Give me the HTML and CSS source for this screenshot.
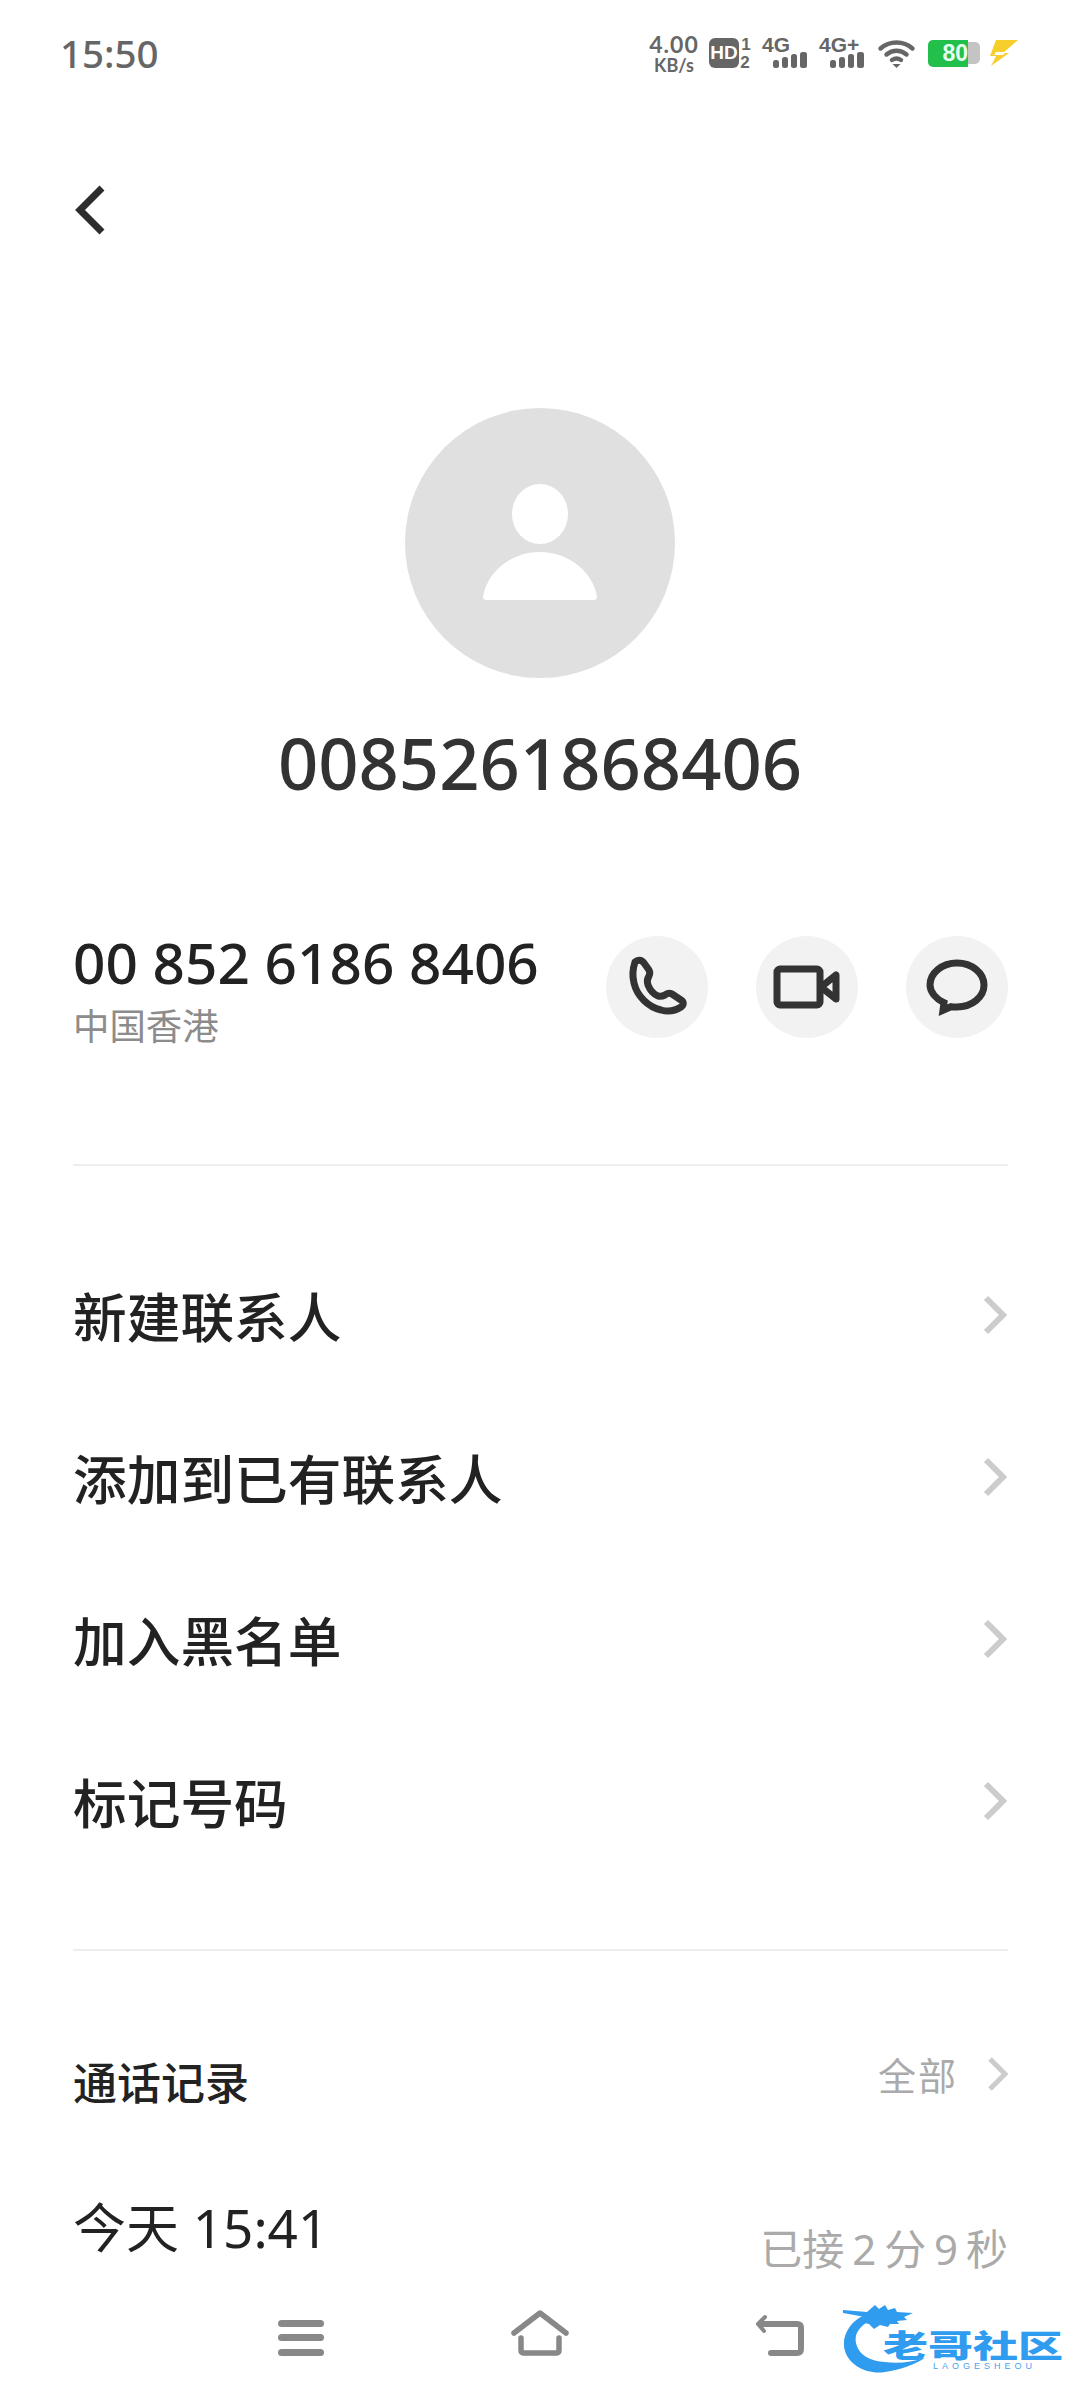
FILE: index.html
```html
<!doctype html>
<html lang="zh-CN">
<head>
	<meta charset="UTF-8">
	<title>0085261868406</title>
	<link rel="stylesheet" href="styles.css">
</head>
<body>
	<div class="status">
		<span class="time">15:50</span>
		<div class="status-icons">
			<div class="speed"><span class="speed-num">4.00</span><span class="speed-unit">KB/s</span></div>
			<svg class="ic-hd" width="40" height="32" viewBox="0 0 40 32">
				<rect x="0" y="1" width="30" height="30" rx="6" fill="#666"/>
				<text x="15" y="22" class="hd-text" text-anchor="middle">HD</text>
				<text x="37" y="13" class="sim-num" text-anchor="middle">1</text>
				<text x="36" y="31" class="sim-num" text-anchor="middle">2</text>
			</svg>
			<svg class="ic-sig" width="45" height="30" viewBox="0 0 45 30">
				<text x="-2" y="14" class="net-text">4G</text>
				<rect x="9" y="22" width="6" height="8" rx="2.5" fill="#666"/>
				<rect x="18" y="19" width="6" height="11" rx="2.5" fill="#666"/>
				<rect x="27" y="16" width="6" height="14" rx="2.5" fill="#666"/>
				<rect x="36" y="14" width="7" height="16" rx="2.5" fill="#666"/>
			</svg>
			<svg class="ic-sig" width="45" height="30" viewBox="0 0 45 30">
				<text x="-2" y="14" class="net-text">4G+</text>
				<rect x="9" y="22" width="6" height="8" rx="2.5" fill="#666"/>
				<rect x="18" y="19" width="6" height="11" rx="2.5" fill="#666"/>
				<rect x="27" y="16" width="6" height="14" rx="2.5" fill="#666"/>
				<rect x="36" y="14" width="7" height="16" rx="2.5" fill="#666"/>
			</svg>
			<svg class="ic-wifi" width="37" height="29" viewBox="0 0 37 29" fill="none" stroke="#666" stroke-width="4.4" stroke-linecap="round">
				<path d="M2.5 9.5c9-8 23-8 32 0"/>
				<path d="M8.5 15.5c6-5 14-5 20 0"/>
				<path d="M14 21c3-2 6-2 9 0"/>
				<path d="M18.5 29l-4-4h8z" fill="#666" stroke="none"/>
			</svg>
			<div class="battery"><span class="battery-fill">80</span><span class="battery-cap"></span></div>
			<svg class="ic-bolt" width="28" height="26" viewBox="0 0 28 26">
				<path d="M6 0h22L13 13h6L1 26l5-10H0z" fill="#f6cf2c"/>
				<path d="M6 12l-2 3h9l3-3z" fill="#fff"/>
			</svg>
		</div>
	</div>

	<div class="topbar">
		<svg class="back" width="30" height="50" viewBox="0 0 30 50" fill="none" stroke="#2d2d2d" stroke-width="7">
			<path d="M27 3L5 25l22 22"/>
		</svg>
	</div>

	<div class="profile">
		<div class="avatar">
			<svg width="114" height="116" viewBox="0 0 114 116">
				<ellipse cx="57" cy="30" rx="28" ry="30" fill="#fff"/>
				<path d="M3 116c-2 0-3-1-3-3C4 88 28 68 57 68s53 20 57 45c0 2-1 3-3 3z" fill="#fff"/>
			</svg>
		</div>
		<div class="name">0085261868406</div>
	</div>

	<div class="contact">
		<div class="contact-info">
			<div class="number">00 852 6186 8406</div>
			<div class="region">中国香港</div>
		</div>
		<div class="actions">
			<div class="action">
				<svg width="102" height="102" viewBox="0 0 102 102" fill="none" stroke="#333" stroke-width="7" stroke-linejoin="round">
					<path d="M29 26c3-3 7-2 9 1l5 7c1 2 1 4 0 6-2 3-2 6-1 9 2 5 5 9 10 11 3 1 5 0 7-1 2-2 5-2 7-1l9 6c3 2 3 5 0 7-6 4-13 5-20 3-13-3-24-14-27-27-2-8-1-15 1-21z"/>
				</svg>
			</div>
			<div class="action">
				<svg width="102" height="102" viewBox="0 0 102 102" fill="none" stroke="#333" stroke-width="7" stroke-linejoin="round">
					<rect x="21" y="33" width="43" height="36" rx="3"/>
					<path d="M65 51l15-12v24z"/>
				</svg>
			</div>
			<div class="action">
				<svg width="102" height="102" viewBox="0 0 102 102" fill="none" stroke="#333" stroke-width="7">
					<path d="M51 27c15 0 27 10 27 22s-12 22-27 22c-2 0-4 0-6-.3l-8 3.5 1-7.5C30 63 24 56 24 49c0-12 12-22 27-22z"/>
				</svg>
			</div>
		</div>
	</div>

	<div class="menu">
		<div class="menu-row"><span>新建联系人</span><svg class="chev" width="24" height="40" viewBox="0 0 24 40" fill="none" stroke="#ccc" stroke-width="6"><path d="M3 3l17 17L3 37"/></svg></div>
		<div class="menu-row"><span>添加到已有联系人</span><svg class="chev" width="24" height="40" viewBox="0 0 24 40" fill="none" stroke="#ccc" stroke-width="6"><path d="M3 3l17 17L3 37"/></svg></div>
		<div class="menu-row"><span>加入黑名单</span><svg class="chev" width="24" height="40" viewBox="0 0 24 40" fill="none" stroke="#ccc" stroke-width="6"><path d="M3 3l17 17L3 37"/></svg></div>
		<div class="menu-row"><span>标记号码</span><svg class="chev" width="24" height="40" viewBox="0 0 24 40" fill="none" stroke="#ccc" stroke-width="6"><path d="M3 3l17 17L3 37"/></svg></div>
	</div>

	<div class="history">
		<div class="history-head">
			<span class="history-title">通话记录</span>
			<span class="history-all">全部<svg class="chev-sm" width="20" height="34" viewBox="0 0 20 34" fill="none" stroke="#ccc" stroke-width="5"><path d="M2 2l15 15L2 32"/></svg></span>
		</div>
		<div class="call">
			<span class="call-time">今天 15:41</span>
			<span class="call-len">已接 2 分 9 秒</span>
		</div>
	</div>

	<div class="navbar">
		<svg class="nav-menu" width="46" height="36" viewBox="0 0 46 36" fill="#888">
			<rect x="0" y="0" width="46" height="7" rx="3.5"/>
			<rect x="0" y="14" width="46" height="7" rx="3.5"/>
			<rect x="0" y="29" width="46" height="7" rx="3.5"/>
		</svg>
		<svg class="nav-home" width="58" height="46" viewBox="0 0 58 46" fill="none" stroke="#888" stroke-width="5.5" stroke-linecap="round" stroke-linejoin="round">
			<path d="M3 23L29 3l26 20"/>
			<path d="M10 28v12c0 2 1 3 3 3h32c2 0 3-1 3-3V28"/>
		</svg>
		<svg class="nav-back" width="50" height="42" viewBox="0 0 50 42" fill="none" stroke="#888" stroke-width="6" stroke-linecap="round" stroke-linejoin="round">
			<path d="M8 10h34c3 0 4 1 4 4v21c0 3-1 4-4 4H16"/>
			<path d="M10 3L3 10l6 7" stroke-width="4"/>
		</svg>
	</div>

	<div class="logo">
		<svg class="logo-mark" width="110" height="75" viewBox="0 0 110 75" fill="#2f9cf0">
			<path d="M26 11C8 18 0 34 4 48c4 14 22 24 40 21 16-2 30-8 40-14-14 4-26 6-40 4-14-1-26-6-29-19-2-10 4-17 16-24z"/>
			<path d="M2 7l24 2 8-7 4 4 6-4 3 5 7-2 2 4 16 1-9 4 3 3-10 1 2 3-9 0-2 3-8-2-6 4-5-5-9-2 5-5-22-4z"/>
		</svg>
		<span class="logo-name">老哥社区</span>
		<span class="logo-sub">LAOGESHEOU</span>
	</div>
</body>
</html>
```

FILE: styles.css
```css
body{
	margin: 0;
	width: 1080px;
	height: 2400px;
	overflow: hidden;
	position: relative;
	background: #fff;
	font-family: "Noto Sans", "Noto Sans CJK SC", sans-serif;
	color: #222;
}
svg{
	overflow: visible;
}

/* status bar */
.status{
	height: 106px;
	padding: 0 62px 0 60px;
	display: flex;
	align-items: center;
	justify-content: space-between;
}
.time{
	font-size: 38.5px;
	font-weight: 500;
	color: #666;
}
.status-icons{
	display: flex;
	align-items: center;
}
.speed{
	display: flex;
	flex-direction: column;
	align-items: center;
	width: 50px;
	margin-right: 10px;
	color: #666;
	line-height: 1;
	font-family: "Lato", sans-serif;
	font-weight: 700;
}
.speed-num{
	font-size: 23px;
	letter-spacing: 1px;
}
.speed-unit{
	font-size: 18px;
}
.hd-text,.sim-num,.net-text{
	font-family: "Liberation Sans", sans-serif;
	font-weight: 700;
	fill: #fff;
}
.hd-text{
	font-size: 19px;
}
.sim-num{
	font-size: 17px;
	fill: #666;
}
.net-text{
	font-size: 21px;
	fill: #666;
}
.ic-hd{
	margin-right: 15px;
}
.ic-sig{
	margin-right: 12px;
}
.ic-wifi{
	margin-right: 13px;
}
.battery{
	width: 52px;
	height: 27px;
	display: flex;
	align-items: center;
}
.battery-fill{
	width: 40px;
	height: 27px;
	background: #22c04a;
	border-radius: 5px 0 0 5px;
	color: #e8fff0;
	font-family: "Liberation Sans", sans-serif;
	font-weight: 700;
	font-size: 23px;
	line-height: 27px;
	text-align: right;
}
.battery-cap{
	width: 12px;
	height: 22px;
	background: #c4c4c4;
	border-radius: 0 5px 5px 0;
}
.ic-bolt{
	margin-left: 10px;
}

/* back arrow */
.topbar{
	height: 208px;
	padding-left: 75px;
	display: flex;
	align-items: center;
}

/* avatar and name */
.profile{
	margin-top: 94px;
	display: flex;
	flex-direction: column;
	align-items: center;
}
.avatar{
	width: 270px;
	height: 270px;
	border-radius: 50%;
	background: #e0e0e0;
	display: flex;
	align-items: center;
	justify-content: center;
}
.avatar svg{
	margin-top: -2px;
}
.name{
	margin-top: 40px;
	font-size: 70.5px;
	font-weight: 500;
	line-height: 90px;
	color: #333;
}

/* number row */
.contact{
	margin: 128px 72px 0 73px;
	padding-bottom: 114px;
	border-bottom: 2px solid #eee;
	display: flex;
	justify-content: space-between;
}
.number{
	font-size: 56.7px;
	font-weight: 500;
	line-height: 64px;
	margin-top: -6px;
	color: #222;
}
.region{
	margin-top: 8px;
	font-size: 36.4px;
	line-height: 48px;
	color: #8c8c8c;
}
.actions{
	display: flex;
	gap: 48px;
}
.action{
	width: 102px;
	height: 102px;
	border-radius: 50%;
	background: #f2f2f2;
}

/* menu */
.menu{
	margin: 68px 72px 0 73px;
	padding-bottom: 67px;
	border-bottom: 2px solid #eee;
}
.menu-row{
	height: 162px;
	display: flex;
	align-items: center;
	justify-content: space-between;
	font-size: 53.7px;
	font-weight: 500;
	color: #222;
}
.chev{
	margin-right: 1px;
}

/* call history */
.history{
	margin: 0 72px 0 73px;
}
.history-head{
	height: 120px;
	padding-top: 70px;
	display: flex;
	align-items: center;
	justify-content: space-between;
}
.history-title{
	font-size: 44px;
	font-weight: 500;
}
.history-all{
	margin-bottom: 15px;
	display: flex;
	align-items: center;
	gap: 30px;
	font-size: 38px;
	letter-spacing: 2px;
	color: #aaa;
}
.call{
	display: flex;
	justify-content: space-between;
	align-items: center;
	height: 96px;
	margin-top: 36px;
}
.call-time{
	font-size: 53px;
}
.call-len{
	margin-top: 43px;
	font-size: 42px;
	word-spacing: -3px;
	color: #aaa;
}

/* bottom nav, sits over the list */
.navbar{
	position: absolute;
	left: 278px;
	top: 2310px;
	width: 527px;
	height: 46px;
	display: flex;
	justify-content: space-between;
	align-items: flex-end;
}

/* watermark */
.logo{
	position: absolute;
	left: 841px;
	top: 2303px;
	width: 225px;
	height: 72px;
}
.logo-mark{
	position: absolute;
	left: 0;
	top: 0;
}
.logo-name{
	position: absolute;
	left: 42px;
	top: 25px;
	font-size: 45px;
	line-height: 34px;
	font-weight: 900;
	color: #2f9cf0;
	white-space: nowrap;
	transform: scaleY(.68);
}
.logo-sub{
	position: absolute;
	left: 92px;
	top: 59px;
	font-family: "Liberation Sans", sans-serif;
	font-size: 9px;
	line-height: 8px;
	letter-spacing: 4px;
	color: #4aa3ee;
}
```
